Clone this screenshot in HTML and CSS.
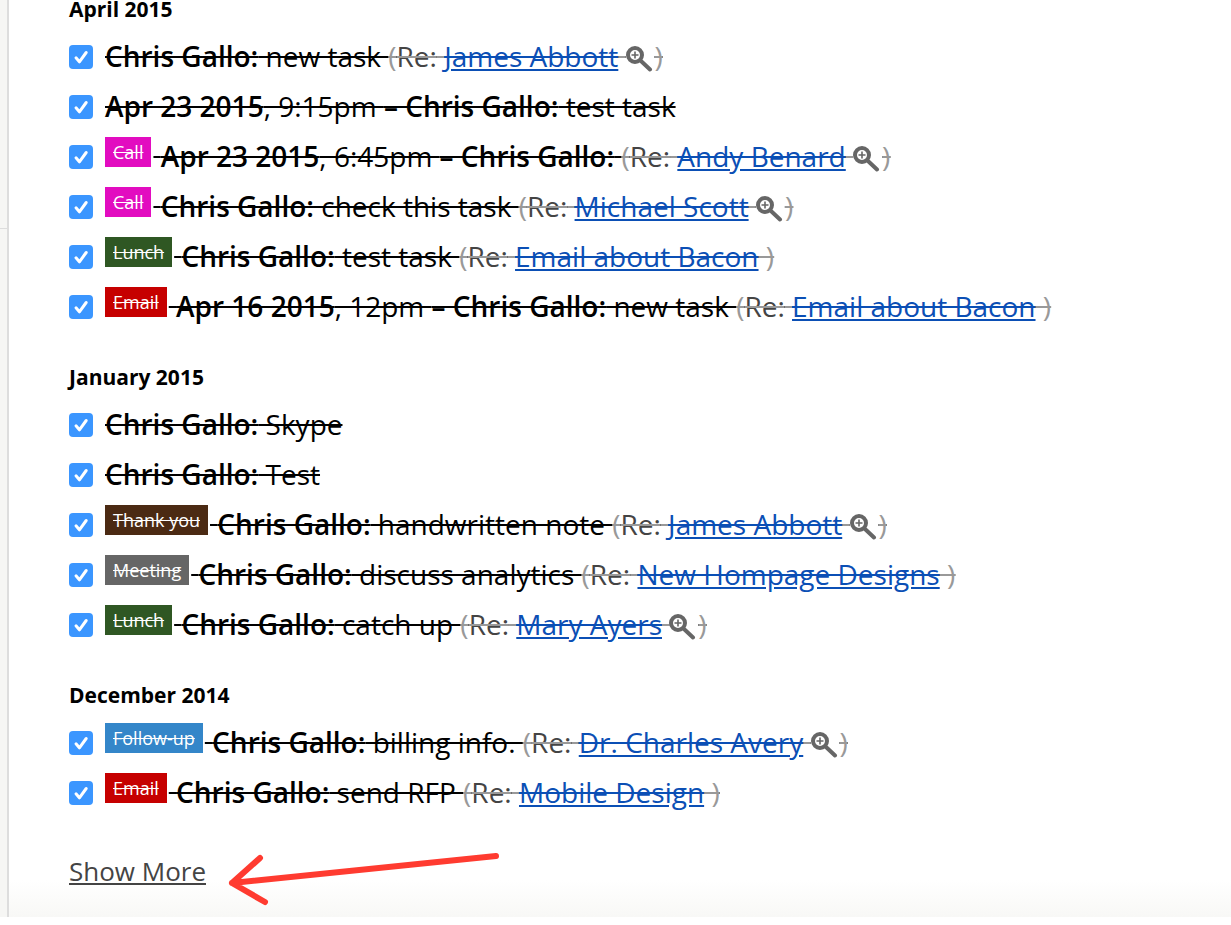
FILE: index.html
```html
<!DOCTYPE html>
<html lang="en">
<head>
<meta charset="utf-8">
<title>Tasks</title>
<link rel="stylesheet" href="styles.css">
</head>
<body>
<svg class="defs" width="0" height="0" aria-hidden="true">
  <symbol id="check" viewBox="0 0 24 24"><path d="M7 12.8l3.4 4 6.8-9.3" fill="none" stroke="#fff" stroke-width="3" stroke-linecap="round" stroke-linejoin="round"/></symbol>
  <symbol id="zoom" viewBox="0 0 27 26"><circle cx="9" cy="9" r="7" fill="none" stroke="#666" stroke-width="4"/><path d="M5.5 9h7M9 5.5v7" stroke="#666" stroke-width="1.6"/><path d="M15 15l9 8.5" stroke="#666" stroke-width="4" stroke-linecap="round"/></symbol>
</svg>
<div class="page">
  <aside class="rail"><div class="rail-top"></div></aside>
  <main class="content">
    <section class="group">
      <h2 class="month">April 2015</h2>
      <ul class="tasks">
        <li class="task"><svg class="box"><use href="#check"/></svg><p class="text"><b>Chris Gallo:</b> new task <span class="re">(<span class="re-word">Re:</span> <a href="#">James Abbott</a> <svg class="zoom"><use href="#zoom"/></svg>)</span></p></li>
        <li class="task"><svg class="box"><use href="#check"/></svg><p class="text"><b>Apr 23 2015</b>, 9:15pm <b>– Chris Gallo:</b> test task</p></li>
        <li class="task"><svg class="box"><use href="#check"/></svg><p class="text"><span class="tag call">Call</span> <b>Apr 23 2015</b>, 6:45pm <b>– Chris Gallo:</b> <span class="re">(<span class="re-word">Re:</span> <a href="#">Andy Benard</a> <svg class="zoom"><use href="#zoom"/></svg>)</span></p></li>
        <li class="task"><svg class="box"><use href="#check"/></svg><p class="text"><span class="tag call">Call</span> <b>Chris Gallo:</b> check this task <span class="re">(<span class="re-word">Re:</span> <a href="#">Michael Scott</a> <svg class="zoom"><use href="#zoom"/></svg>)</span></p></li>
        <li class="task"><svg class="box"><use href="#check"/></svg><p class="text"><span class="tag lunch">Lunch</span> <b>Chris Gallo:</b> test task <span class="re">(<span class="re-word">Re:</span> <a href="#">Email about Bacon</a> )</span></p></li>
        <li class="task"><svg class="box"><use href="#check"/></svg><p class="text"><span class="tag email">Email</span> <b>Apr 16 2015</b>, 12pm <b>– Chris Gallo:</b> new task <span class="re">(<span class="re-word">Re:</span> <a href="#">Email about Bacon</a> )</span></p></li>
      </ul>
    </section>
    <section class="group">
      <h2 class="month">January 2015</h2>
      <ul class="tasks">
        <li class="task"><svg class="box"><use href="#check"/></svg><p class="text"><b>Chris Gallo:</b> Skype</p></li>
        <li class="task"><svg class="box"><use href="#check"/></svg><p class="text"><b>Chris Gallo:</b> Test</p></li>
        <li class="task"><svg class="box"><use href="#check"/></svg><p class="text"><span class="tag thanks">Thank you</span> <b>Chris Gallo:</b> handwritten note <span class="re">(<span class="re-word">Re:</span> <a href="#">James Abbott</a> <svg class="zoom"><use href="#zoom"/></svg>)</span></p></li>
        <li class="task"><svg class="box"><use href="#check"/></svg><p class="text"><span class="tag meeting">Meeting</span> <b>Chris Gallo:</b> discuss analytics <span class="re">(<span class="re-word">Re:</span> <a href="#">New Hompage Designs</a> )</span></p></li>
        <li class="task"><svg class="box"><use href="#check"/></svg><p class="text"><span class="tag lunch">Lunch</span> <b>Chris Gallo:</b> catch up <span class="re">(<span class="re-word">Re:</span> <a href="#">Mary Ayers</a> <svg class="zoom"><use href="#zoom"/></svg>)</span></p></li>
      </ul>
    </section>
    <section class="group">
      <h2 class="month">December 2014</h2>
      <ul class="tasks">
        <li class="task"><svg class="box"><use href="#check"/></svg><p class="text"><span class="tag follow">Follow-up</span> <b>Chris Gallo:</b> billing info. <span class="re">(<span class="re-word">Re:</span> <a href="#">Dr. Charles Avery</a> <svg class="zoom"><use href="#zoom"/></svg>)</span></p></li>
        <li class="task"><svg class="box"><use href="#check"/></svg><p class="text"><span class="tag email">Email</span> <b>Chris Gallo:</b> send RFP <span class="re">(<span class="re-word">Re:</span> <a href="#">Mobile Design</a> )</span></p></li>
      </ul>
    </section>
    <a class="more" href="#">Show More</a>
  </main>
  <svg class="arrow" viewBox="0 0 280 60" width="280" height="60" aria-hidden="true"><path d="M274 8L10 35M38 10L10 35 43 54" fill="none" stroke="#ff3b30" stroke-width="6" stroke-linecap="round" stroke-linejoin="round"/></svg>
</div>
</body>
</html>
```
FILE: styles.css
```css
html, body {
  margin: 0;
  background: #fff;
}
.defs {
  position: absolute;
}
.page {
  position: relative;
  display: flex;
  height: 917px;
  overflow: hidden;
  font-family: "Open Sans", sans-serif;
  background: linear-gradient(to bottom, #fff 880px, #f8f8f6 917px);
}
.rail {
  flex: none;
  width: 7px;
  background: #f6f6f4;
  border-right: 2px solid #ddd;
}
.rail-top {
  height: 228px;
  border-bottom: 1px solid #ddd;
}
.content {
  flex: 1;
  min-width: 0;
  padding-left: 60px;
  margin-top: -36px;
}
.group {
  margin-top: 22px;
}
.month {
  margin: 0;
  font-size: 21px;
  line-height: 46px;
  font-weight: 700;
  color: #000;
}
.tasks {
  list-style: none;
  margin: 0;
  padding: 0;
}
.task {
  display: flex;
  align-items: center;
  gap: 12px;
  height: 50px;
}
.box {
  flex: none;
  width: 24px;
  height: 24px;
  border-radius: 4px;
  background: #3b96ff;
}
.text {
  margin: 0 0 2px;
  font-size: 28px;
  line-height: 50px;
  color: #000;
  white-space: nowrap;
  text-decoration: line-through;
}
.text b {
  font-weight: 600;
}
.tag {
  display: inline-block;
  padding: 0 8px;
  margin-right: 2px;
  height: 30px;
  font-size: 18px;
  line-height: 30px;
  color: #fff;
  vertical-align: 8px;
  text-decoration: line-through;
}
.call { background: #e20cc0; }
.lunch { background: #2f5723; }
.email { background: #c60000; }
.thanks { background: #4b2a13; }
.meeting { background: #666; }
.follow { background: #3486c9; }
.re {
  color: #999;
  text-decoration: line-through;
}
.re-word {
  color: #444;
}
.re a {
  color: #0b4fb5;
  text-decoration: underline line-through;
}
.zoom {
  display: inline-block;
  width: 27px;
  height: 26px;
  margin-right: 2px;
  vertical-align: -5px;
}
.more {
  display: inline-block;
  margin-top: 35px;
  font-size: 26px;
  line-height: 36px;
  color: #444;
  text-decoration: underline;
}
.arrow {
  position: absolute;
  left: 222px;
  top: 848px;
}
```
